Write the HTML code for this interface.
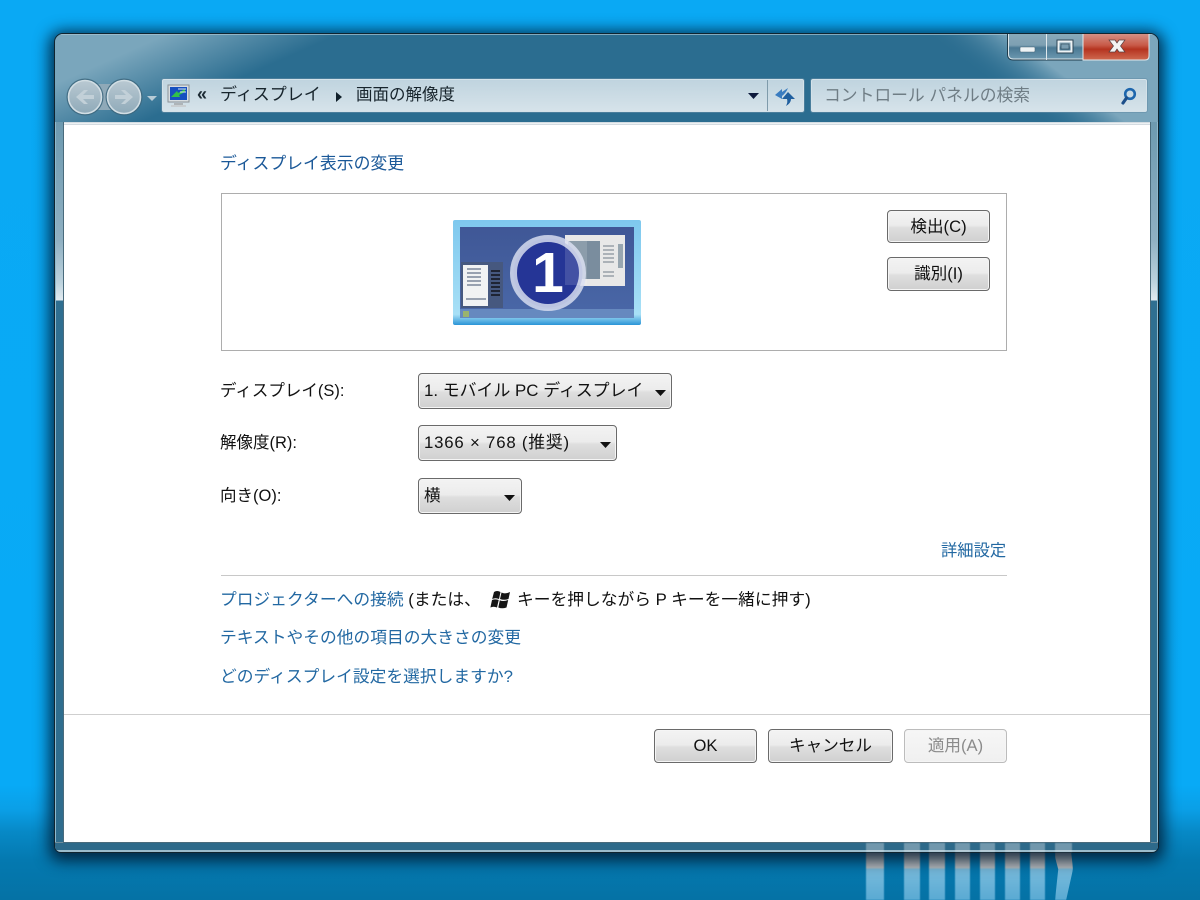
<!DOCTYPE html>
<html lang="ja">
<head>
<meta charset="utf-8">
<title>画面の解像度</title>
<style>
html,body{margin:0;padding:0;width:1200px;height:900px;overflow:hidden}
body{position:relative;background:linear-gradient(180deg,#0aa9f4 0,#08aaf6 785px,#0a9fe6 810px,#0789c6 832px,#0479b0 860px,#0572a5 900px);font-family:"Liberation Sans","Noto Sans CJK JP",sans-serif;color:#111}
.a{position:absolute;white-space:nowrap}
.bar{position:absolute;top:845px;height:55px;background:linear-gradient(180deg,#9db0ba 0,#b4babd 14px,#bcbfc1 23px,#78bbdc 24px,#5aaad3 55px);filter:blur(.5px)}
.ghost{position:absolute;top:843px;height:9px;background:rgba(225,230,232,.38);filter:blur(.6px)}
#win{position:absolute;left:54px;top:33px;width:1105px;height:820px;box-sizing:border-box;border:1px solid #0f2430;border-radius:9px 9px 7px 7px;box-shadow:0 3px 15px 5px rgba(0,18,38,.8);background:#2b6d90;overflow:hidden;filter:blur(.35px)}
#frameTop{position:absolute;left:0;top:0}
#fl,#fr{position:absolute;top:88px;width:9px;height:732px;box-sizing:border-box;background:linear-gradient(180deg,#6d9ab0 0,#8fb0c2 118px,#bcd2dd 160px,#dfe9ef 177px,#e2ecf1 178px,#2f6f91 179px,#2f6d8e 100%)}
#fl{left:0;border-left:1px solid #8fb9cc}
#fr{right:0;border-right:1px solid #8fb9cc}
#fb{position:absolute;left:0;right:0;bottom:0;height:10px;background:#2e6a8a;border-top:1px solid #6f8d9c;border-bottom:2px solid #9bbccc;box-sizing:border-box}
#content{position:absolute;left:8px;top:88px;width:1086px;height:720px;background:#fff;border:1px solid #4a6b7c;border-top:none}
#content:before{content:"";position:absolute;left:0;right:0;top:0;height:3px;background:linear-gradient(180deg,#c6d2da,#f5f7f8 60%,#bcc8d0)}
.caps{position:absolute;left:952px;top:-1px;width:143px;height:28px}
.addr{position:absolute;left:107px;top:45px;height:33px;background:linear-gradient(180deg,#c0d4df,#d6e3ea);border:1px solid #d4e2e9;box-shadow:0 0 0 1px rgba(100,140,165,.55);box-sizing:border-box;border-radius:2px}
.btn{position:absolute;box-sizing:border-box;border:1px solid #6a6a6a;border-radius:4px;background:linear-gradient(180deg,#f3f3f3 0,#ececec 46%,#dedede 54%,#d0d0d0 100%);box-shadow:inset 0 0 0 1px #f5f5f5;font-size:16.600px;text-align:center;color:#111;white-space:nowrap}
.sel{text-align:left;padding-left:5px}
.sel svg{position:absolute;top:15px}
.lnk{color:#2268a2}
.t{font-size:16.750px;line-height:22px}
</style>
</head>
<body>
<div class="bar" style="left:866px;width:18px"></div>
<div class="bar" style="left:904px;width:16px"></div>
<div class="bar" style="left:929px;width:16px"></div>
<div class="bar" style="left:955px;width:15px"></div>
<div class="bar" style="left:980px;width:15px"></div>
<div class="bar" style="left:1005px;width:15px"></div>
<div class="bar" style="left:1030px;width:15px"></div>
<div class="bar" style="left:1055px;width:18px;clip-path:polygon(0 0,85% 0,100% 42%,100% 44%,62% 100%,0 100%,18% 44%,0 22%)"></div>

<div id="win">
  <svg id="frameTop" width="1103" height="100" viewBox="0 0 1103 100">
    <defs>
      <linearGradient id="tl" gradientUnits="userSpaceOnUse" x1="170.600" y1="-26" x2="199" y2="38"><stop offset="0" stop-color="#7aa6bc"/><stop offset="1" stop-color="#2b6d90"/></linearGradient>
      <linearGradient id="tr" gradientUnits="userSpaceOnUse" x1="905" y1="26" x2="935" y2="-14"><stop offset="0" stop-color="#2b6d90" stop-opacity="0"/><stop offset="1" stop-color="#7ba6bc"/></linearGradient>
    </defs>
    <rect width="1103" height="100" fill="url(#tl)"/>
    <rect width="1103" height="100" fill="url(#tr)"/>
    <rect width="1103" height="1" fill="#a9c4d2" fill-opacity=".7"/>
  </svg>
  <div id="fl"></div><div id="fr"></div><div id="fb"></div>
  <div id="content"></div>

  <!-- caption buttons -->
  <svg class="caps" viewBox="0 0 143 28">
    <defs>
      <linearGradient id="g1" x1="0" y1="0" x2="0" y2="1"><stop offset="0" stop-color="#8aaaba"/><stop offset=".45" stop-color="#7d9fb2"/><stop offset=".55" stop-color="#4a7893"/><stop offset="1" stop-color="#6f9bb2"/></linearGradient>
      <linearGradient id="g2" x1="0" y1="0" x2="0" y2="1"><stop offset="0" stop-color="#d5948a"/><stop offset=".45" stop-color="#c85a48"/><stop offset=".6" stop-color="#b53420"/><stop offset="1" stop-color="#cf6a50"/></linearGradient>
    </defs>
    <path d="M.5 0V21q0 6 6 6H76V0Z" fill="url(#g1)" stroke="#1f3c4c" stroke-width="1"/>
    <path d="M1.500 0V21q0 5 5 5H76V0Z" fill="none" stroke="#dbe6eb" stroke-width="1"/>
    <path d="M76 0H142V23q0 4-4 4H76Z" fill="url(#g2)" stroke="#dfe8ec" stroke-width="1"/>
    <path d="M39.500 0V27" stroke="#dfe8ec"/>
    <rect x="13" y="14" width="15" height="5" rx="1" fill="#eef3f5" stroke="#4a6a7c" stroke-width=".6"/>
    <rect x="50" y="7" width="16" height="13" fill="none" stroke="#2c4656" stroke-width="1"/>
    <rect x="51.500" y="8.500" width="13" height="10" fill="none" stroke="#eef3f5" stroke-width="2"/>
    <rect x="54" y="11" width="8" height="5" fill="#7a9db1" stroke="#2c4656" stroke-width=".6"/>
    <path d="M102 7H108L110 10L112 7H118L113.500 13L118 19H112L110 16L108 19H102L106.500 13Z" fill="#f3f3f3" stroke="#5a4040" stroke-width=".7"/>
  </svg>

  <!-- nav -->
  <svg class="a" style="left:10px;top:42px" width="100" height="42" viewBox="0 0 100 42">
    <defs>
      <linearGradient id="n" x1="0" y1="0" x2="0" y2="1"><stop offset="0" stop-color="#b9c9d2"/><stop offset=".5" stop-color="#a4b9c5"/><stop offset="1" stop-color="#8faab9"/></linearGradient>
    </defs>
    <path d="M20 8H60V34H20Z" fill="#8fa9b8"/>
    <circle cx="20" cy="21" r="18.500" fill="#3c667c" fill-opacity=".85"/>
    <circle cx="59" cy="21" r="18.500" fill="#3c667c" fill-opacity=".85"/>
    <circle cx="20" cy="21" r="16.500" fill="url(#n)" stroke="#d2dee4" stroke-width="1.600"/>
    <circle cx="59" cy="21" r="16.500" fill="url(#n)" stroke="#d2dee4" stroke-width="1.600"/>
    <path d="M11 21L19 14H23L18 19H29V23H18L23 28H19Z" fill="#c2d0d8"/>
    <path d="M68 21L60 14H56L61 19H50V23H61L56 28H60Z" fill="#c2d0d8"/>
    <path d="M82 20H92L87 25Z" fill="#b7cbd6"/>
  </svg>

  <!-- address -->
  <div class="addr" style="width:642px"></div>
  <div class="a" style="left:712px;top:46px;width:1px;height:31px;background:#7f9bab"></div>
  <svg class="a" style="left:111px;top:49px" width="26" height="28" viewBox="0 0 26 28">
    <rect x="2" y="2" width="21" height="17" fill="#d8dde0" stroke="#8a9298"/>
    <rect x="4" y="4" width="17" height="13" fill="#1650c0"/>
    <path d="M5 14L11 8L12 10L19 6V9L13 12L14 14Z" fill="#31c04a"/>
    <path d="M12 6H20M14 9H20" stroke="#d7e6f4" stroke-width="1"/>
    <rect x="8" y="20" width="9" height="2" fill="#aeb4b8"/><rect x="5" y="22" width="15" height="2" fill="#c9ced1"/>
  </svg>
  <div class="a" style="left:142px;top:47px;font-size:18px;font-weight:bold;line-height:26px;color:#1c2a33">«</div>
  <div class="a" style="left:165px;top:49px;font-size:17px;line-height:24px;color:#17242c">ディスプレイ</div>
  <svg class="a" style="left:279px;top:56px" width="10" height="14"><path d="M2 2L8 7L2 12Z" fill="#10202a"/></svg>
  <div class="a" style="left:301px;top:49px;font-size:16.500px;line-height:24px;color:#17242c">画面の解像度</div>
  <svg class="a" style="left:692px;top:58px" width="14" height="10"><path d="M1 1H12L6.500 7Z" fill="#0d1a3c"/></svg>
  <svg class="a" style="left:718px;top:50px" width="26" height="26" viewBox="0 0 26 26">
    <path d="M2 11L9 5L9 8Q12 6 15 4Q13 9 9 12L9 15Z" fill="#3a7cc0"/>
    <path d="M15 8L22 15H18Q18 19 13 22Q15 18 14 15H9Z" fill="#1f5f9f"/>
  </svg>

  <!-- search -->
  <div class="addr" style="left:756px;width:336px"></div>
  <div class="a" style="left:769px;top:50px;font-size:16.800px;line-height:24px;color:#6f7d85">コントロール パネルの検索</div>
  <svg class="a" style="left:1063px;top:51px" width="24" height="24" viewBox="0 0 24 24">
    <circle cx="12" cy="9" r="4.800" fill="none" stroke="#1d66ad" stroke-width="2.600"/>
    <path d="M8.500 13L5 18" stroke="#1d4f8a" stroke-width="3.200" stroke-linecap="round"/>
  </svg>

  <!-- content -->
  <div class="a lnk" style="left:165px;top:119px;font-size:16.850px;line-height:22px;color:#1a5898">ディスプレイ表示の変更</div>
  <div class="a" style="left:166px;top:159px;width:786px;height:158px;box-sizing:border-box;border:1px solid #adadad"></div>

  <!-- monitor -->
  <svg class="a" style="left:398px;top:185px" width="190" height="107" viewBox="0 0 190 107">
    <defs>
      <linearGradient id="m" x1="0" y1="0" x2="0" y2="1"><stop offset="0" stop-color="#3f5796"/><stop offset="1" stop-color="#4a68a8"/></linearGradient>
      <linearGradient id="mb" x1="0" y1="0" x2="0" y2="1"><stop offset="0" stop-color="#7ec8ee"/><stop offset=".9" stop-color="#a8e0f6"/><stop offset="1" stop-color="#2a94d6"/></linearGradient>
    </defs>
    <rect x="0" y="1" width="188" height="105" rx="2" fill="url(#mb)"/>
    <rect x="7" y="8" width="174" height="91" fill="url(#m)"/>
    <rect x="7" y="90" width="174" height="9" fill="#6689bf"/>
    <rect x="10" y="92" width="6" height="6" fill="#9ab36e"/>
    <rect x="8" y="43" width="42" height="46" fill="#46587f"/>
    <rect x="10" y="46" width="25" height="41" fill="#f1f2f3"/>
    <path d="M14 50h14M14 54h14M14 58h14M14 62h14M14 66h14M13 80h20" stroke="#7b8699" stroke-width="1.500"/>
    <path d="M38 52h9M38 56h9M38 60h9M38 64h9M38 68h9M38 72h9M38 76h9" stroke="#1f2433" stroke-width="2"/>
    <rect x="112" y="16" width="60" height="51" fill="#e8e8e8"/>
    <rect x="115" y="22" width="32" height="38" fill="#7a8d9e"/>
    <path d="M150 27h11M150 31h11M150 35h11M150 39h11M150 43h11M150 53h11M150 57h11" stroke="#98a0a8" stroke-width="1.500"/>
    <rect x="165" y="25" width="5" height="24" fill="#98a6b0"/>
    <circle cx="95" cy="54" r="34.500" fill="#253596" stroke="#d6dcef" stroke-opacity=".85" stroke-width="7"/>
    <rect x="112" y="22" width="22" height="44" fill="#fff" fill-opacity=".14"/>
    <text x="95" y="73" font-family="Liberation Sans" font-weight="bold" font-size="57" fill="#fff" text-anchor="middle">1</text>
  </svg>

  <div class="btn" style="left:832px;top:176px;width:103px;height:33px;line-height:31px">検出(C)</div>
  <div class="btn" style="left:832px;top:223px;width:103px;height:34px;line-height:32px">識別(I)</div>

  <div class="a" style="left:165px;top:346px;font-size:16.500px;line-height:22px">ディスプレイ(S):</div>
  <div class="a" style="left:165px;top:398px;font-size:16.500px;line-height:22px">解像度(R):</div>
  <div class="a" style="left:165px;top:451px;font-size:16.500px;line-height:22px">向き(O):</div>

  <div class="btn sel" style="left:363px;top:339px;width:254px;height:36px;line-height:33px;font-size:16.900px">1. モバイル PC ディスプレイ<svg style="left:236px" width="11" height="8"><path d="M0 1H11L5.500 7Z" fill="#111"/></svg></div>
  <div class="btn sel" style="left:363px;top:391px;width:199px;height:36px;line-height:33px;font-size:16.800px;letter-spacing:.8px">1366 × 768 (推奨)<svg style="left:181px" width="11" height="8"><path d="M0 1H11L5.500 7Z" fill="#111"/></svg></div>
  <div class="btn sel" style="left:363px;top:444px;width:104px;height:36px;line-height:33px">横<svg style="left:85px" width="11" height="8"><path d="M0 1H11L5.500 7Z" fill="#111"/></svg></div>

  <div class="a lnk" style="left:886px;top:506px;font-size:16.300px;line-height:22px">詳細設定</div>
  <div class="a" style="left:166px;top:541px;width:786px;height:1px;background:#c8c8c8"></div>

  <div class="a t" style="left:165px;top:555px"><span class="lnk">プロジェクターへの接続</span> (または、</div>
  <svg class="a" style="left:435px;top:555px" width="22" height="22" viewBox="0 0 22 22">
    <path d="M4 3Q7 1 10.500 3L9 10Q5.500 8.500 2.200 10Z M11.500 3.500Q15 5.500 20 3L18.500 10Q14 11.500 10 10Z M2 11Q5 9.800 8.700 11L7 18.500Q3.500 17 .4 18.500Z M9.800 11.200Q13 13 18.200 11L16.500 18.500Q12 20 8.300 18.500Z" fill="#151515"/>
  </svg>
  <div class="a t" style="left:462px;top:555px;font-size:16.750px">キーを押しながら P キーを一緒に押す)</div>
  <div class="a t lnk" style="left:165px;top:593px">テキストやその他の項目の大きさの変更</div>
  <div class="a t lnk" style="left:165px;top:632px">どのディスプレイ設定を選択しますか?</div>

  <div class="a" style="left:9px;top:680px;width:1086px;height:1px;background:#cfcfcf"></div>
  <div class="btn" style="left:599px;top:695px;width:103px;height:34px;line-height:32px">OK</div>
  <div class="btn" style="left:713px;top:695px;width:125px;height:34px;line-height:32px">キャンセル</div>
  <div class="btn" style="left:849px;top:695px;width:103px;height:34px;line-height:32px;color:#8b8b8b;border-color:#bcbcbc;background:linear-gradient(180deg,#f6f6f6,#f0f0f0)">適用(A)</div>
</div>
<div class="ghost" style="left:866px;width:18px"></div>
<div class="ghost" style="left:904px;width:16px"></div>
<div class="ghost" style="left:929px;width:16px"></div>
<div class="ghost" style="left:955px;width:15px"></div>
<div class="ghost" style="left:980px;width:15px"></div>
<div class="ghost" style="left:1005px;width:15px"></div>
<div class="ghost" style="left:1030px;width:15px"></div>
<div class="ghost" style="left:1055px;width:17px"></div>
</body>
</html>
